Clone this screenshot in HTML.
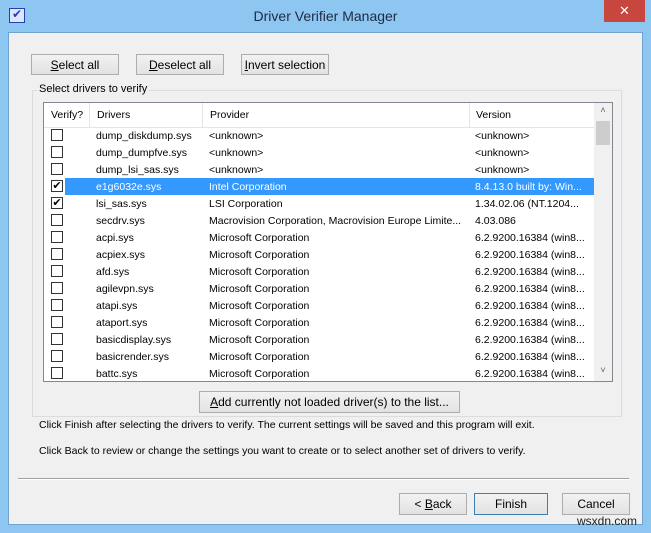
<!DOCTYPE html>
<html><head><style>
body{margin:0;width:651px;height:533px;background:#8ec6f2;font-family:"Liberation Sans",sans-serif;font-size:10.5px;color:#000;position:relative;overflow:hidden}
.abs{position:absolute}
.client{left:8px;top:32px;width:635px;height:493px;background:#f0f0f0;border:1px solid #6fa3d0;box-sizing:border-box}
.btn{position:absolute;background:linear-gradient(#f2f2f2,#e2e2e2);border:1px solid #adadad;box-sizing:border-box;text-align:center;font-size:12px;line-height:20px}
.title{left:0;top:0;width:651px;height:32px;text-align:center;line-height:32px;font-size:14px;color:#1e2a40}
.close{left:604px;top:0;width:41px;height:22px;background:#c7463d;color:#fff;text-align:center;line-height:21px;font-size:13px}
.row{position:absolute;left:44px;width:550px;height:17px;line-height:18px;font-size:10.5px}
.row span{position:absolute;white-space:nowrap;overflow:hidden}
.cb{position:absolute;left:7px;top:2px;width:12px;height:12px;border:1px solid #333;background:#fff;box-sizing:border-box;font-size:11px;line-height:10px;text-align:center}
.sel{background:#3399ff;color:#fff}
</style></head><body>
<div class="abs title">Driver Verifier Manager</div>
<div class="abs" style="left:9px;top:8px;width:14px;height:13px;border:1px solid #2244aa;background:#dde6ff;color:#2040c0;font-size:12px;line-height:11px;text-align:center">✔</div>
<div class="abs close">✕</div>
<div class="abs client"></div>
<div class="btn" style="left:31px;top:54px;width:88px;height:21px"><u>S</u>elect all</div>
<div class="btn" style="left:136px;top:54px;width:88px;height:21px"><u>D</u>eselect all</div>
<div class="btn" style="left:241px;top:54px;width:88px;height:21px"><u>I</u>nvert selection</div>
<div class="abs" style="left:32px;top:90px;width:590px;height:327px;border:1px solid #dcdcdc;box-sizing:border-box"></div>
<div class="abs" style="left:37px;top:83px;background:#f0f0f0;padding:0 2px;font-size:11px">Select drivers to verify</div>
<div class="abs" style="left:43px;top:102px;width:570px;height:280px;border:1px solid #828790;background:#fff;box-sizing:border-box;overflow:hidden">
 <div class="abs" style="left:0;top:0;width:550px;height:24px;line-height:24px;font-size:10.5px;border-bottom:1px solid #e5e5e5">
  <span class="abs" style="left:7px">Verify?</span><span class="abs" style="left:45px;top:0;height:24px;border-left:1px solid #e5e5e5;padding-left:7px">Drivers</span>
  <span class="abs" style="left:158px;top:0;height:24px;border-left:1px solid #e5e5e5;padding-left:7px">Provider</span>
  <span class="abs" style="left:425px;top:0;height:24px;border-left:1px solid #e5e5e5;padding-left:6px">Version</span>
 </div>
 <div class="abs" style="left:550px;top:0;width:18px;height:278px;background:#f0f0f0">
  <div class="abs" style="left:0;top:2px;width:18px;text-align:center;color:#606060;font-size:9px">&#x2C4;</div>
  <div class="abs" style="left:2px;top:18px;width:14px;height:24px;background:#cdcdcd"></div>
  <div class="abs" style="left:0;top:262px;width:18px;text-align:center;color:#606060;font-size:9px">&#x2C5;</div>
 </div>
</div>
<div class="abs" style="left:0;top:0">
<div class="row" style="top:127px"><div class="cb"></div><span style="left:52px">dump_diskdump.sys</span><span style="left:165px">&lt;unknown&gt;</span><span style="left:431px">&lt;unknown&gt;</span></div>
<div class="row" style="top:144px"><div class="cb"></div><span style="left:52px">dump_dumpfve.sys</span><span style="left:165px">&lt;unknown&gt;</span><span style="left:431px">&lt;unknown&gt;</span></div>
<div class="row" style="top:161px"><div class="cb"></div><span style="left:52px">dump_lsi_sas.sys</span><span style="left:165px">&lt;unknown&gt;</span><span style="left:431px">&lt;unknown&gt;</span></div>
<div class="row" style="top:178px"><div class="cb">✔</div><div class="abs sel" style="left:21px;top:0;width:529px;height:17px"></div><span style="left:52px;color:#fff">e1g6032e.sys</span><span style="left:165px;color:#fff">Intel Corporation</span><span style="left:431px;color:#fff">8.4.13.0 built by: Win...</span></div>
<div class="row" style="top:195px"><div class="cb">✔</div><span style="left:52px">lsi_sas.sys</span><span style="left:165px">LSI Corporation</span><span style="left:431px">1.34.02.06 (NT.1204...</span></div>
<div class="row" style="top:212px"><div class="cb"></div><span style="left:52px">secdrv.sys</span><span style="left:165px">Macrovision Corporation, Macrovision Europe Limite...</span><span style="left:431px">4.03.086</span></div>
<div class="row" style="top:229px"><div class="cb"></div><span style="left:52px">acpi.sys</span><span style="left:165px">Microsoft Corporation</span><span style="left:431px">6.2.9200.16384 (win8...</span></div>
<div class="row" style="top:246px"><div class="cb"></div><span style="left:52px">acpiex.sys</span><span style="left:165px">Microsoft Corporation</span><span style="left:431px">6.2.9200.16384 (win8...</span></div>
<div class="row" style="top:263px"><div class="cb"></div><span style="left:52px">afd.sys</span><span style="left:165px">Microsoft Corporation</span><span style="left:431px">6.2.9200.16384 (win8...</span></div>
<div class="row" style="top:280px"><div class="cb"></div><span style="left:52px">agilevpn.sys</span><span style="left:165px">Microsoft Corporation</span><span style="left:431px">6.2.9200.16384 (win8...</span></div>
<div class="row" style="top:297px"><div class="cb"></div><span style="left:52px">atapi.sys</span><span style="left:165px">Microsoft Corporation</span><span style="left:431px">6.2.9200.16384 (win8...</span></div>
<div class="row" style="top:314px"><div class="cb"></div><span style="left:52px">ataport.sys</span><span style="left:165px">Microsoft Corporation</span><span style="left:431px">6.2.9200.16384 (win8...</span></div>
<div class="row" style="top:331px"><div class="cb"></div><span style="left:52px">basicdisplay.sys</span><span style="left:165px">Microsoft Corporation</span><span style="left:431px">6.2.9200.16384 (win8...</span></div>
<div class="row" style="top:348px"><div class="cb"></div><span style="left:52px">basicrender.sys</span><span style="left:165px">Microsoft Corporation</span><span style="left:431px">6.2.9200.16384 (win8...</span></div>
<div class="row" style="top:365px;height:15px;overflow:hidden"><div class="cb"></div><span style="left:52px">battc.sys</span><span style="left:165px">Microsoft Corporation</span><span style="left:431px">6.2.9200.16384 (win8...</span></div>
</div>
<div class="btn" style="left:199px;top:391px;width:261px;height:22px;line-height:21px"><u>A</u>dd currently not loaded driver(s) to the list...</div>
<div class="abs" style="left:39px;top:419px">Click Finish after selecting the drivers to verify. The current settings will be saved and this program will exit.</div>
<div class="abs" style="left:39px;top:445px">Click Back to review or change the settings you want to create or to select another set of drivers to verify.</div>
<div class="abs" style="left:18px;top:478px;width:611px;height:1px;background:#a0a0a0;border-bottom:1px solid #fff"></div>
<div class="btn" style="left:399px;top:493px;width:68px;height:22px">&lt; <u>B</u>ack</div>
<div class="btn" style="left:474px;top:493px;width:74px;height:22px;border-color:#3c7fb1">Finish</div>
<div class="btn" style="left:562px;top:493px;width:68px;height:22px">Cancel</div>
<div class="abs" style="left:577px;top:514px;font-size:12px;color:#222">wsxdn.com</div>
</body></html>
